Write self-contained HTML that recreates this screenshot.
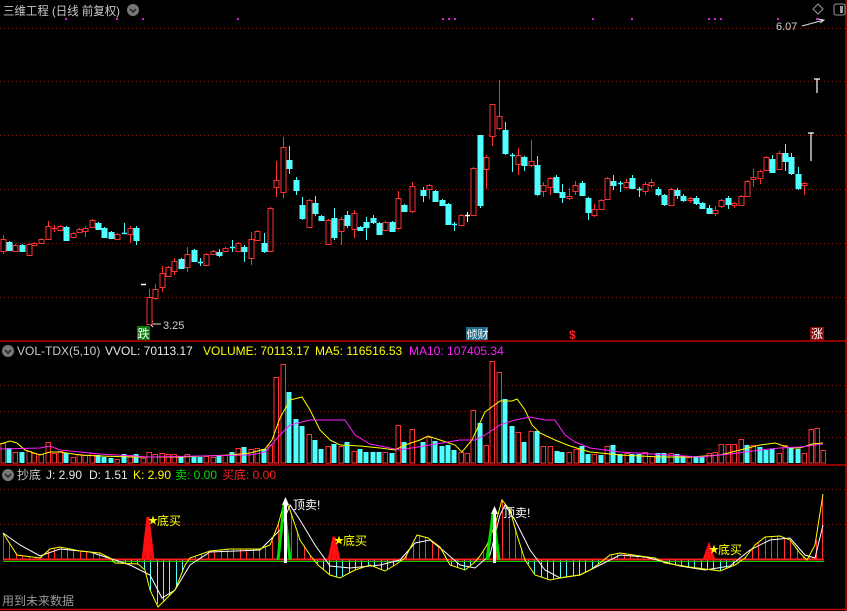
<!DOCTYPE html>
<html><head><meta charset="utf-8"><style>
html,body{margin:0;padding:0;background:#000;width:847px;height:611px;overflow:hidden}
svg{display:block}
text{font-family:"Liberation Sans","Noto Sans CJK SC",sans-serif}
</style></head><body>
<svg id="s" width="847" height="611" viewBox="0 0 847 611" xmlns="http://www.w3.org/2000/svg">
<rect width="847" height="611" fill="#000"/>
<g stroke="#8a1010" stroke-dasharray="1,3" stroke-width="1">
<line x1="0" y1="28.5" x2="845" y2="28.5"/><line x1="0" y1="81.5" x2="845" y2="81.5"/><line x1="0" y1="135.5" x2="845" y2="135.5"/><line x1="0" y1="189.5" x2="845" y2="189.5"/><line x1="0" y1="243.5" x2="845" y2="243.5"/><line x1="0" y1="297.5" x2="845" y2="297.5"/>
<line x1="0" y1="385.5" x2="845" y2="385.5"/><line x1="0" y1="411.5" x2="845" y2="411.5"/><line x1="0" y1="437.5" x2="845" y2="437.5"/>
<line x1="0" y1="489.5" x2="845" y2="489.5"/><line x1="0" y1="524.5" x2="845" y2="524.5"/>
</g>
<g stroke="#c00000" stroke-width="1.5">
<line x1="0" y1="341" x2="847" y2="341"/><line x1="0" y1="465" x2="847" y2="465"/><line x1="0" y1="609.5" x2="847" y2="609.5"/><line x1="846" y1="0" x2="846" y2="611"/>
</g>
<text x="3" y="15" fill="#c8c8c8" font-size="12" textLength="117" lengthAdjust="spacingAndGlyphs">三维工程 (日线 前复权)</text>
<circle cx="133" cy="10" r="6" fill="#777"/><path d="M130 9 L133 12 L136 9" stroke="#222" stroke-width="1.5" fill="none"/>
<g fill="#e020e0"><rect x="65" y="18" width="2" height="2"/><rect x="116" y="18" width="2" height="2"/><rect x="142" y="18" width="2" height="2"/><rect x="237" y="18" width="2" height="2"/><rect x="442" y="18" width="2" height="2"/><rect x="448" y="18" width="2" height="2"/><rect x="454" y="18" width="2" height="2"/><rect x="592" y="18" width="2" height="2"/><rect x="631" y="18" width="2" height="2"/><rect x="708" y="18" width="2" height="2"/><rect x="714" y="18" width="2" height="2"/><rect x="720" y="18" width="2" height="2"/><rect x="777" y="18" width="2" height="2"/><rect x="816" y="18" width="2" height="2"/></g>
<path d="M818 4 L823 9 L818 14 L813 9 Z" stroke="#999" fill="none"/>
<rect x="834" y="4" width="11" height="11" rx="2" stroke="#999" fill="none"/><rect x="840" y="6" width="3" height="7" fill="#999"/>
<text x="776" y="30" fill="#d0d0d0" font-size="11">6.07</text>
<path d="M802 26 L824 20 M818 19 L824 20 L820 23" stroke="#ddd" fill="none"/>
<text x="163" y="329" fill="#d0d0d0" font-size="11">3.25</text>
<path d="M150 324 L161 324 M153 321 L150 324 L153 327" stroke="#ddd" fill="none"/>
<rect x="137" y="326" width="13" height="14" fill="#0a7a0a"/><text x="137.5" y="338" fill="#fff" font-size="12">跌</text>
<rect x="466" y="327" width="22" height="13" fill="#1a6a8a"/><text x="466.5" y="338" fill="#fff" font-size="11">倾财</text>
<text x="569" y="339" fill="#ff2020" font-size="12" font-weight="bold">$</text>
<rect x="810" y="327" width="14" height="13" fill="#8a0a0a"/><text x="811" y="338" fill="#fff" font-size="12">涨</text>
<g id="cand"></g>
<g id="vol"></g>
<g id="kdj"></g>
<circle cx="8" cy="351" r="6" fill="#777"/><path d="M5 350 L8 353 L11 350" stroke="#222" stroke-width="1.5" fill="none"/>
<text y="355" font-size="12"><tspan x="17" fill="#c8c8c8">VOL-TDX(5,10)</tspan><tspan x="105" fill="#e8e8e8">VVOL: 70113.17</tspan><tspan x="203" fill="#ffff00">VOLUME: 70113.17</tspan><tspan x="315" fill="#ffff00">MA5: 116516.53</tspan><tspan x="409" fill="#ff20ff">MA10: 107405.34</tspan></text>
<circle cx="8" cy="475" r="6" fill="#777"/><path d="M5 474 L8 477 L11 474" stroke="#222" stroke-width="1.5" fill="none"/>
<text y="479" font-size="12"><tspan x="17" fill="#c8c8c8">抄底</tspan><tspan x="46" fill="#e8e8e8">J: 2.90</tspan><tspan x="89" fill="#e8e8e8">D: 1.51</tspan><tspan x="133" fill="#ffff00">K: 2.90</tspan><tspan x="175" fill="#00e000">卖: 0.00</tspan><tspan x="222" fill="#ff2020">买底: 0.00</tspan></text>
<text x="2" y="605" fill="#9a9a9a" font-size="12">用到未来数据</text>
</svg>
<script>
var NS="http://www.w3.org/2000/svg";
function el(p,t,a){var e=document.createElementNS(NS,t);for(var k in a)e.setAttribute(k,a[k]);p.appendChild(e);return e;}
var R="#ff3030",C="#50ffff",W="#ffffff";
var cd=[[3,239,251,'r',235,254],[9,242,250,'c'],[15,245,251,'r'],[22,245,251,'c'],[29,244,255,'r'],[34,243,245,'r'],[41,239,243,'r'],[48,226,239,'r',221],[54,228,229,'r',225,232],[60,226,230,'r'],[66,227,240,'c'],[73,233,237,'r'],[79,229,232,'r'],[85,228,231,'r',226,237],[92,220,227,'r'],[98,223,229,'c'],[104,228,237,'c'],[111,232,238,'c'],[117,234,239,'r'],[124,233,234,'c',223,234],[130,228,234,'r',226,243],[136,228,240,'c',226,245],[143,284,285,'w',284,285],[149,297,324,'r',289,325],[155,289,298,'r',284,300],[162,273,287,'r',266,292],[168,267,276,'r'],[174,261,271,'r',258,275],[181,259,268,'c'],[187,254,267,'r',247,272],[194,250,261,'c'],[200,262,263,'c',258,266],[206,254,265,'r'],[213,251,254,'r'],[219,252,255,'c',249,257],[225,248,251,'r'],[232,247,248,'c',240,252],[238,243,251,'r'],[244,247,251,'c',245,262],[251,239,258,'r',232,265],[257,231,240,'r'],[264,243,251,'c',233,253],[270,208,251,'r'],[276,180,187,'r',161,197],[283,147,192,'r',137,198],[289,160,168,'c',146,174],[296,180,190,'c',177,195],[302,205,218,'c',197,220],[309,200,227,'r'],[315,203,213,'c',196,216],[321,216,220,'c'],[328,220,244,'r'],[334,218,237,'c',208,240],[341,219,231,'r',217,245],[347,215,225,'c',211,228],[354,213,229,'r',210,238],[360,227,230,'c'],[366,222,227,'c',217,240],[373,218,222,'c',215,224],[379,223,234,'c'],[385,222,230,'r'],[392,222,231,'c'],[398,198,228,'r',191,230],[404,205,211,'c'],[412,186,211,'r',182,213],
[423,190,195,'c',187,202],[429,185,189,'r',184,199],[435,191,201,'c'],[442,200,205,'c'],[448,204,224,'c'],[454,224,225,'c',222,231],[461,215,225,'r'],[467,215,216,'w',212,222],[473,168,215,'r'],[480,135,205,'c',135,208],[486,157,169,'r',155,189],[492,104,136,'r',104,146],[499,116,128,'r',80,130],[505,130,153,'c',122,155],[512,155,156,'c',153,172],[518,155,164,'r',148,175],[524,157,165,'c',156,171],[531,161,165,'r',140,167],[537,165,194,'c',156,196],[543,185,191,'r',182,197],[550,178,187,'r',177,195],[556,177,192,'c',175,193],[562,192,197,'c',184,203],[569,196,198,'r',188,200],[575,185,191,'r',181,195],[582,183,195,'c',181,196],[588,198,212,'c',197,220],[594,209,215,'r',204,217],[601,200,209,'r'],[607,178,199,'r'],[613,181,185,'c',175,190],[620,183,184,'c',181,192],[626,182,187,'r',179,189],[632,178,188,'c',175,189],[639,189,190,'c',187,197],[645,184,191,'r',182,195],[651,182,185,'r',179,188],[658,189,194,'c',187,196],[664,195,204,'c',194,206],[671,189,205,'r'],[677,190,195,'c',188,199],[683,196,200,'c',194,202],[690,198,200,'r',197,203],[696,198,203,'c',196,205],[702,203,208,'c'],[709,208,213,'c',205,214],[715,210,213,'r',206,216],[721,200,206,'r',199,208],[728,198,204,'c',196,209],[734,203,205,'r',202,208],[741,196,205,'r'],[747,181,196,'r'],[753,177,179,'r',169,187],[760,171,178,'r',170,184],[766,157,170,'r'],[772,159,172,'c',155,173],[779,153,169,'r',151,170],[785,153,161,'c',144,171],[791,157,173,'c',153,175],[798,174,188,'c',167,190],[804,183,185,'r',182,195]];
var g=document.getElementById('cand');
cd.forEach(function(d){var x=d[0],t=d[1],b=d[2],c=d[3];var col=c=='r'?R:(c=='c'?C:W);
 var wt=d[4]!==undefined?d[4]:t-1,wb=d[5]!==undefined?d[5]:b+1;
 el(g,'line',{x1:x+.5,y1:wt,x2:x+.5,y2:wb,stroke:col,'stroke-width':1});
 if(b-t<=1){el(g,'line',{x1:x-2,y1:t+.5,x2:x+3,y2:t+.5,stroke:col,'stroke-width':1.5});}
 else if(c=='r'){el(g,'rect',{x:x-2,y:t+.5,width:5,height:b-t,fill:'#000',stroke:col,'stroke-width':1});}
 else el(g,'rect',{x:x-2.5,y:t,width:6,height:b-t+1,fill:col});});
el(g,'path',{d:'M814 79 L820 79 M817 79 L817 93 M808 133 L814 133 M811 133 L811 161',stroke:W,'stroke-width':1.2,fill:'none'});
var vh=[20,15,11,11,12,10,9,21,10,12,10,6,9,8,10,8,6,5,4,9,8,9,5,11,9,10,9,9,7,9,6,6,7,6,8,8,11,15,16,14,15,14,18,86,99,71,44,37,29,23,14,17,19,17,21,12,14,11,11,11,11,10,38,21,34,21,26,22,17,18,13,11,10,53,40,18,102,91];
var vg=document.getElementById('vol');var BASE=463;
function bar(x,h,c){
 if(c=='c')el(vg,'rect',{x:x-2.5,y:BASE-h,width:5,height:h,fill:C});
 else el(vg,'rect',{x:x-2,y:BASE-h+.5,width:4.5,height:h-0.5,fill:'#000',stroke:R,'stroke-width':1});}
for(var i=0;i<vh.length&&i<cd.length;i++){var c=cd[i][3];if(c=='w')c='r';bar(cd[i][0],vh[i],c);}
var vx=[505,512,518,524,531,537,543,550,557,562,569,576,582,588,594,601,607,613,620,627,632,639,645,652,658,664,671,677,683,689,696,702,709,715,721,728,734,741,747,753,760,766,772,779,785,791,798,804,811,817,823];
var v2=[[64,'c'],[37,'c'],[31,'r'],[21,'c'],[32,'r'],[32,'c'],[17,'r'],[17,'r'],[12,'c'],[11,'c'],[11,'r'],[14,'r'],[17,'c'],[9,'c'],[9,'r'],[8,'c'],[17,'r'],[18,'c'],[9,'c'],[10,'r'],[9,'c'],[9,'c'],[11,'r'],[7,'r'],[10,'c'],[10,'c'],[10,'r'],[9,'c'],[7,'c'],[6,'r'],[7,'c'],[7,'c'],[10,'r'],[11,'r'],[19,'r'],[19,'r'],[19,'r'],[24,'r'],[18,'c'],[18,'r'],[16,'c'],[13,'c'],[14,'c'],[10,'r'],[18,'r'],[16,'c'],[14,'c'],[10,'r'],[34,'r'],[35,'r'],[13,'r']];
for(var j=0;j<vx.length;j++)bar(vx[j],v2[j][0],v2[j][1]);
function pl(p,pts,col,w){el(p,'polyline',{points:pts,stroke:col,'stroke-width':w||1,fill:'none'});}
pl(vg,"0,444 10,441 17,443 25,450 40,455 50,452 60,452 80,455 100,456 130,457 180,457 230,455 250,453 265,449 272,440 280,418 290,400 302,397 310,410 320,430 330,440 340,445 360,446 380,448 395,450 405,445 420,440 428,436 440,440 455,445 462,452 472,440 485,412 500,401 512,401 517,399 525,410 532,425 540,433 555,440 570,446 590,452 620,455 660,457 690,457 720,455 740,450 760,445 775,443 790,448 800,448 812,444 823,443","#ffff00");
pl(vg,"0,449 40,448 50,446 60,450 100,454 150,457 250,455 265,452 280,435 290,425 310,420 345,420 355,435 370,444 400,450 430,445 460,440 475,440 485,435 500,425 515,420 530,417 545,420 555,420 565,435 575,442 590,448 620,452 700,457 730,454 760,450 780,448 800,447 823,444","#ff20ff");
var kg=document.getElementById('kdj');var Z=560;
var Y=[[3,533],[17,555],[40,558],[50,549],[60,547],[80,551],[100,553],[110,558],[115,563],[138,564],[145,570],[150,590],[158,607],[165,600],[175,590],[185,565],[190,558],[210,551],[230,549],[260,549],[270,545],[278,525],[285,500],[290,510],[300,540],[310,555],[318,565],[330,575],[340,578],[355,570],[370,565],[385,571],[395,565],[405,558],[417,535],[428,538],[440,547],[450,565],[465,570],[475,562],[480,556],[487,545],[495,525],[502,500],[510,510],[517,535],[525,560],[535,575],[550,580],[565,577],[580,575],[590,570],[600,563],[610,555],[620,553],[640,556],[655,558],[665,563],[690,567],[720,571],[735,565],[745,558],[755,545],[765,537],[780,536],[790,540],[800,553],[807,560],[815,545],[823,494]];
var D="3,533 20,545 40,556 60,549 90,552 115,560 130,565 150,575 162,598 175,590 190,565 210,552 260,550 280,530 290,505 300,520 315,545 330,566 350,568 380,565 400,560 415,543 430,540 445,552 460,565 475,568 490,555 500,515 505,505 515,520 530,550 545,570 560,578 580,575 600,565 620,555 645,557 680,566 705,570 730,566 750,550 770,540 790,538 805,555 815,558 823,525";
function yAt(x){for(var i=0;i<Y.length-1;i++){if(x>=Y[i][0]&&x<=Y[i+1][0]){var t=(x-Y[i][0])/(Y[i+1][0]-Y[i][0]);return Y[i][1]+t*(Y[i+1][1]-Y[i][1]);}}return Z;}
for(var x=3;x<=823;x+=6.4){var y=yAt(x);var xx=Math.round(x)+.5;if(Math.abs(y-Z)<1)continue;el(kg,'line',{x1:xx,y1:Z,x2:xx,y2:y,stroke:y<Z?R:C,'stroke-width':1});}
el(kg,'line',{x1:3,y1:561.5,x2:824,y2:561.5,stroke:'#00d000','stroke-width':1});
el(kg,'line',{x1:3,y1:559.5,x2:824,y2:559.5,stroke:'#ff2020','stroke-width':2});
pl(kg,D,"#ffffff");
pl(kg,Y.map(function(p){return p.join(',')}).join(' '),"#ffff00");
function buy(x,top,tx,ty){el(kg,'path',{d:'M'+(x-5)+' 560 L'+x+' '+top+' L'+(x+5)+' 560',stroke:'#ff1010','stroke-width':3,fill:'none'});
 el(kg,'path',{d:'M'+(x-2)+' 560 L'+x+' '+(top+6)+' L'+(x+2)+' 560',stroke:'#ff1010','stroke-width':2,fill:'#ff1010'});
 var t=el(kg,'text',{x:tx-6,y:ty+4,fill:'#ffff00','font-size':'10'});t.textContent='★';
 t=el(kg,'text',{x:tx+3,y:ty+5,fill:'#ffff00','font-size':'12'});t.textContent='底买';}
buy(148,517,154,520);buy(334,537,340,540);buy(709,546,715,549);
function sell(x,top,tx,ty){el(kg,'path',{d:'M'+(x-6)+' 560 L'+x+' '+top+' L'+(x+6)+' 560',stroke:'#00e000','stroke-width':3,fill:'none'});
 el(kg,'rect',{x:x,y:top,width:3,height:563-top,fill:'#fff'});
 el(kg,'path',{d:'M'+(x-2)+' '+(top)+' L'+(x+1.5)+' '+(top-8)+' L'+(x+5)+' '+top+' Z',fill:'#fff'});
 var t=el(kg,'text',{x:tx,y:ty,fill:'#ffffff','font-size':'12'});t.textContent='顶卖!';}
sell(284,505,293,509);sell(493,514,503,517);
</script>
</body></html>
